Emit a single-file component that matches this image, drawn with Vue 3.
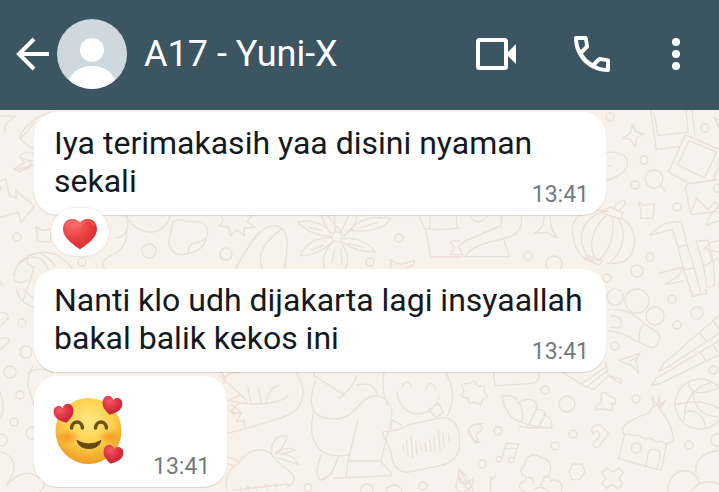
<template>
  <div class="chat-page">
    <!-- Header -->
    <header class="header">
      <button class="icon-btn back-btn" type="button" aria-label="Kembali">
        <svg viewBox="0 0 34 34" class="back-icon">
          <path d="M33 17H4M18 2 3 17l15 15" fill="none" stroke="currentColor" stroke-width="4" />
        </svg>
      </button>
      <svg class="avatar" viewBox="0 0 70 70" aria-hidden="true">
        <defs>
          <clipPath id="avatarClip"><circle cx="35" cy="35" r="35" /></clipPath>
        </defs>
        <g clip-path="url(#avatarClip)">
          <rect width="70" height="70" fill="#cfd8de" />
          <circle cx="35" cy="31" r="12" fill="#fff" />
          <path d="M12 61c4-9 12-14 23-14s19 5 23 14l-7 9H19z" fill="#fff" />
        </g>
      </svg>
      <h1 class="contact-name">{{ contact }}</h1>
      <nav class="actions">
        <button class="icon-btn" type="button" aria-label="Panggilan video">
          <svg viewBox="0 0 48 48" class="action-icon">
            <rect x="6" y="10" width="28" height="28" rx="1.5" fill="none" stroke="currentColor" stroke-width="4" />
            <path d="M34 24 44 14v20z" fill="currentColor" />
          </svg>
        </button>
        <button class="icon-btn" type="button" aria-label="Panggilan suara">
          <svg viewBox="0 0 48 48" class="action-icon">
            <path
              d="M10 10C10.500 14 11 17 12.800 20L17 15.800 16.200 10zM28 35.200C31 37 34 37.500 38 38V31.800L32.200 31zM8 6H18q1.400 0 1.600 1.600L21 16q.2 1.300-.7 2.200L15 23.500C17.500 28 20 30.500 24.500 33L29.800 27.700q.9-.9 2.200-.7L40.400 28.400q1.600.2 1.600 1.600V40q0 2-2 2C21 42 6 27 6 8q0-2 2-2z"
              fill="currentColor" fill-rule="evenodd"
            />
          </svg>
        </button>
        <button class="icon-btn" type="button" aria-label="Menu">
          <svg viewBox="0 0 24 48" class="menu-icon">
            <circle cx="12" cy="12" r="4" fill="currentColor" />
            <circle cx="12" cy="24" r="4" fill="currentColor" />
            <circle cx="12" cy="36" r="4" fill="currentColor" />
          </svg>
        </button>
      </nav>
    </header>

    <main class="chat">
      <!-- Wallpaper -->
      <svg class="wallpaper" viewBox="0 110 719 382" preserveAspectRatio="xMinYMin slice" aria-hidden="true">
        <g class="doodle">
          <circle v-for="(dot, i) in dots" :key="i" :cx="dot[0]" :cy="dot[1]" :r="dot[2]" />
        </g>

        <!-- photos, lantern and bamboo -->
        <g class="doodle large" transform="translate(460 100) scale(.3333)">
          <path d="M517 74l11 22 25 6-23 12-5 26-13-21-24-5 23-14z" />
          <path d="M572 30l17 119 67-9M696 30l9 76M582 38l12 68 91-9-7-67" />
          <path d="M676 104l110 48M676 104l-50 112 62 34 70-8 24-55M687 122l-34 73 81 39 36-77z" />
          <path d="M762 52l20 12M764 54l12 28M600 255l17 18" />
          <path d="M440 157c45-4 67 14 62 40-4 20-28 33-62 45M443 196l10 4M470 212h2" />
          <path d="M790 237l-102 14q-13 3-11 16l15 77 98-12M692 341l18-47 34 36 20-25 25 29M790 250q-35 3-28 20 6 10 28 5M790 303l-38 42-14 31 52-18" />
          <path d="M537 305l14 12 32-6-4 44-38-1 3-18z" />
          <path d="M440 334c-70-14-113 23-101 75 9 52 34 68 45 69M482 354c42 20 51 73 32 108-17 30-47 31-72 27M430 334c-68 23-79 82-51 130 8 14 19 18 25 19M443 343c-37 27-56 82-45 112 3 17 11 24 21 25M456 350c12 40-8 113-44 132M472 353c32 38 18 105-25 136M382 466l-9 12 46 17 8-13zM432 333q20-18 28-8l29 14-7 18-52-16zM462 329c2-21 27-32 34-24 4 12-12 17-23 30" />
          <path d="M665 366c-47-4-73 15-96 40l68-18 17 54 27-8zM654 442l17 67 32-5-22-70M671 509l28 79 24-7-20-77M709 424l35-3 16 61-29 17zM731 499l10 64 23-7-4-74M599 519l72-18-16 27-41 25 57-10M790 420l-35 6-23 20 52 12M744 448l12 35 34-12" />
          <path d="M252 350c2 29-16 44-31 51l40-4 30 17c-18-31-21-42-21-63" />
          <path d="M124 347v30L20 421l-25 18 15 31h138l-15-46M184 347c2 39-4 50-39 65L78 429c-32 10-55 26-60 40M30 350q22 30 52 0" />
        </g>

        <!-- skewer, chopsticks, hut, shell, trees -->
        <g class="doodle large" transform="translate(460 290) scale(.3333)">
          <path d="M445 59c46-5 78 10 107 42l40 26c16 14 0 50-20 45l-47-21c-21-15-48-25-80-29M454 78c34 0 37 28 22 36l-25-2M552 101q-20 18-13 55" />
          <path d="M790 65L609 223l-12 22 24-12L790 122M720 130l16 20M760 93l15 22M790 145L588 265l-12 22 25-7 189-92M721 187l15 22M760 163l13 25" />
          <path d="M475 211l65-21-12 22 8 37-20-22zM512 212l20-10" />
          <path d="M307 247l65 40 29 12 44-42-8-43M365 282l70-49M379 292l63-50M447 258l31 20q10 4 6-9l-33-12" />
          <path d="M101 247l3 32q2 9 13 8l101-7q20 0 20-34" />
          <path d="M646 345c53-17 98-14 140 17M690 276c-11 14 8 31 28 32 36 2 45-14 68-16M755 277c-43 10-86 48-82 113M678 365c28-8 55 10 59 50M770 380c-42 0-73-35-70-76" />
          <path d="M577 353l-11 18c-33 7-66 26-79 43-2 17 12 23 18 16l17 8 15-2 15 10 19-1 16 10 19-1 12 9 13-7q13-1 9-15c-6-32-19-58-36-77l-8-14M577 353q12-11 27-2M581 351l-5-30 13 22M592 344l6-25 2 27 16-15-14 22M493 436l-17 70 128 35 15-77M557 531l8-42c10-20 39-11 35 10l-8 37" />
          <circle cx="529" cy="474" r="15" />
          <path d="M126 319c36-10 66 15 61 77-31-2-55-36-61-77zM173 340c38-24 62-10 56 18l-24 49-18-11M229 358c31 1 32 23 16 33l-10 20-26-6M251 377c23-1 27 31 23 37l-39-3M178 409l36 5h60" />
          <path d="M425 309q14-5 18 6l24 12-1 15-13-3q11 20 0 23-22-9-45-2c-5-11 5-19 17-22-4-14-1-25 0-29z" />
          <path d="M36 276q9-7 12 6 5 10 16 6 12-3 10 8-4 12 5 17 8 10-6 13-9 3-7 10-5 12-14 4-7-7-16-2-12 3-11-8-2-9-12-7-12-4-4-15 6-9-2-14-6-12 8-13 13 1 21-5z" />
          <path d="M28 421c-1-19 32-26 38-9 2 17-20 14-18 26l8 18-12 3zM398 432c-10-23 17-35 30-21l18 20-33 42q-12-1-16-11l23-24-8-16z" />
          <path d="M126 506l13-46 38 2-14 41M134 475l36 1" />
          <circle cx="117" cy="508" r="8" />
          <circle cx="154" cy="510" r="8" />
          <path d="M199 562c-23-7-17-31-4-36-2-26 26-39 45-25 25 2 37 25 30 43q-2 18-18 17M193 606c-21-7-17-29-1-31 8-21 29-13 28 3M241 588l13-29q20 0 18 15 19-11 34 11l-2 25M221 600q25-20 48 10" />
          <path d="M338 522l28 1 9 22-15 23-25 1-8-24zM426 546l17-12 17 13 17-13 14 14-14 16 11 17-13 15-18-12-18 11-14-15 13-14z" />
          <path d="M625 610c-8-44 26-73 60-67 21 5 33 27 31 41M708 548c-6-37 23-65 77-67M693 610c14-37 56-43 92-25M92 610v-49M92 564q9 5 13-7M0 540q28 23 40 65M0 563l29 43M690 0l6 20 45-9-5-13" />
        </g>

        <!-- flower, thumb and planet between the bubbles -->
        <g class="doodle large" transform="translate(200 200) scale(.3333)">
          <path d="M397 100q-48-49-104-33 42 43 100 41M393 113q-70 0-92 54 52 1 97-42M400 125q-42 43-25 84M420 125q36 41 15 84M428 116q60-7 98 40-59 1-99-31M424 97L378 40M422 97l28-58M432 107q49-39 34-65M391 100q-28-45-25-60M406 94l-3-50M453 92q30-50 119-36-27 43-115 36M474 85l61-18M326 82l41 10M336 150l34-14M404 150l-9 38M423 149l4 43M446 130l45 13" />
          <path d="M107 204c48-84 77-130 120-127 25 5 33 23 34 50 2 23-3 52-8 78M245 88c-38 26-65 58-64 92l6 28M180 160h2" />
          <path d="M66 49q10 18-11 28l31 4 6 26 20-18 21 18 0-23 32-2-23-17 13-20" />
          <path d="M658 51l16 34q53 8 105-2M690 45v40M770 45v35M678 90l14 81h90M780 124q-25-5-31 4 22 8 2 36h29M568 180l34 13 42-11-2 12-27 13M572 204l3-25" />
          <path d="M-40 65q-27-14-42 4l-12 60c6 31 29 41 55 32 41-5 58-28 63-68-7-23-18-29-35-29zM-35 160q-3-28 24-32 20-4 32-16" />
          <path d="M-225 45c42 73 122 64 136 0M-220 42c8 46 2 62-30 72M-220 85q4 65-52 83-34 24-12 41" />
        </g>

        <!-- hugging figures -->
        <g class="doodle large" transform="translate(220 360) scale(.3333)">
          <path d="M0 48l80 73M230 38c32 52 23 98-21 126q-61 24-205 61M84 84l8 42M115 82l9 48M137 130q5-43 39-55M64 130q97 9 140-21M80 128q-43 1-43 31l27-1-15 27 23-3 2 17" />
          <path d="M282 38v9l91 58M410 47q-11 39-53 68M286 63c-31 88 0 116 65 114 69-10 65-72 123-70 35 11 48 39 38 77l-29 117M410 75q53-12 62 30M280 160c-18 84 16 143 107 124M414 181l-30 122h97l33 34-1 10-171 8M383 303l-4 45M303 285q-24 65 0 75 31 0 52-72M336 340l-29 17M492 38q-10 54 11 98M678 38q38 72 3 130M518 181l28 15M516 187l-3 24" />
          <path d="M546 82q14-32 30-2M617 87q15-32 31 0M530 95c12 85 107 88 127 14M625 150l31-20 14 27-21 15zM490 215q44 0 73-20l102-22c46-1 58 40 53 91-5 25-25 47-58 53l-98 20q-45-2-48-60l-27-57z" />
          <path d="M548 253l3 22M560 240l4 49M573 229l5 63M587 244l4 37M602 253l3 20M615 247l4 28M629 240l4 34M641 226l4 49M655 210l5 63M669 219l3 44M685 220l4 27" />
          <path d="M20 390c-6-28-2-56 34-81 44-55 90-48 115-8l50 44q12 24-18 35M58 310q-20-23-50-17M45 318l-30-9M158 290c-13-37 13-69 43-61q-7 35-36 50M168 283q32-29 59-13l-48 13q38-5 56 30l-64-20M40 390l164-18M60 380l3 16M83 376l3 16M108 376l3 16M136 372l5 16M166 370l5 18" />
          <path d="M790 191q-37-2-46 21 5 29 36 36M717 325l-2 28q-20 45 16 44 39-24 26-39l-18 10zM719 350q-5 29 26 20" />
        </g>

        <!-- left edge -->
        <g class="doodle large" transform="translate(0 100) scale(.3333)">
          <path d="M0 47l46 2-30 25-2 25M153 36Q81 59 59 111q6 19 42 34M105 65L63 116M100 161q-33-10-40 11l14 15-30 19 12 10 34-15q7-17-9-21M45 210l54-14M63 174l35 10M0 244l17-7 11 49 21 8-2-22 57 46-41 50-8-31-56 16M-2 255q12 15-1 21" />
          <path d="M107 380l21 12 28-5-6 39-41-2 4-13zM42 527c4-44 49-73 100-69 44 4 65 37 76 49M60 487q61-38 84 20M84 465q-9 32 19 36l-33 99M43 540q20 15 40 0M118 460q36 14 46 39M0 545l7 11" />
          <path d="M50 569q10 42 49 52M70 568l29 26M0 638q29-2 24 19L0 680M0 716q31-9 27 10l-27 23M98 799q-14 28-15 57l19 63M84 820q38-25 75 0M0 874q19 60 0 77M0 1055q47 12 42 58l-22 43q50-60 100-20 25 10 0 40" />
          <path d="M650 810q30 10 22 40 0-35 48-32M720 885l-35 17 35 6M692 913l28 20M690 930l15 20" />
        </g>
      </svg>

      <section class="messages">
        <template v-for="message in messages" :key="message.id">
          <article class="bubble" :class="{ 'is-emoji': message.emoji }">
            <svg v-if="message.emoji" class="emoji" viewBox="0 0 69 69" role="img" aria-label="Wajah tersenyum dengan hati">
              <defs>
                <radialGradient id="face" cx=".5" cy=".35" r=".66">
                  <stop offset="0" stop-color="#ffe982" />
                  <stop offset=".55" stop-color="#fdd04a" />
                  <stop offset="1" stop-color="#eb9b26" />
                </radialGradient>
                <radialGradient id="cheek">
                  <stop offset="0" stop-color="#f58a1c" stop-opacity=".75" />
                  <stop offset="1" stop-color="#f58a1c" stop-opacity="0" />
                </radialGradient>
                <radialGradient id="smallHeart" cx=".35" cy=".25" r=".8">
                  <stop offset="0" stop-color="#f45864" />
                  <stop offset=".4" stop-color="#e33a4a" />
                  <stop offset="1" stop-color="#bf2032" />
                </radialGradient>
              </defs>
              <circle cx="34.500" cy="35" r="33" fill="url(#face)" />
              <ellipse cx="14" cy="41" rx="12" ry="8" fill="url(#cheek)" />
              <ellipse cx="56" cy="41" rx="12" ry="8" fill="url(#cheek)" />
              <path d="M17.500 32c1-8 10-8 11 0M41.500 32c1-8 10-8 11 0" fill="none" stroke="#70501c" stroke-width="3.500" stroke-linecap="round" />
              <path d="M23 44.500q12 7 24 0-2 8-12 8t-12-8z" fill="#684713" stroke="#684713" stroke-width="1" stroke-linejoin="round" />
              <path v-for="place in faceHearts" :key="place" :transform="place" d="M0 10C-5 7-10 4-10-2-10-9-2-10 0-5 2-10 10-9 10-2 10 4 5 7 0 10z" fill="url(#smallHeart)" />
            </svg>
            <p v-else class="text">
              <span v-for="line in message.lines" :key="line" class="line">{{ line }}</span>
            </p>
            <time class="time">{{ message.time }}</time>
          </article>
          <button v-if="message.reaction" class="reaction" type="button" aria-label="Reaksi hati">
            <svg class="heart" viewBox="0 0 34 31">
              <defs>
                <radialGradient id="heart" cx=".32" cy=".2" r=".9">
                  <stop offset="0" stop-color="#fb6c69" />
                  <stop offset=".45" stop-color="#ec4343" />
                  <stop offset="1" stop-color="#cf272b" />
                </radialGradient>
              </defs>
              <path d="M17 30.500C13 27 0 20 0 10 0 4 4 0 9 0c4 0 7 2 8 4 1-2 4-4 8-4 5 0 9 4 9 10C34 20 21 27 17 30.500z" fill="url(#heart)" />
              <path d="M3 7q2-5 6-5 5 0 8 5 3-5 8-5 4 0 6 4" fill="none" stroke="#ff9a94" stroke-width="1" stroke-linecap="round" opacity=".5" />
            </svg>
          </button>
        </template>
      </section>
    </main>
  </div>
</template>

<script setup>
import { ref } from 'vue'

const contact = ref('A17 - Yuni-X')

const messages = ref([
  { id: 1, lines: ['Iya terimakasih yaa disini nyaman', 'sekali'], time: '13:41', reaction: true },
  { id: 2, lines: ['Nanti klo udh dijakarta lagi insyaallah', 'bakal balik kekos ini'], time: '13:41' },
  { id: 3, emoji: true, time: '13:41' }
])

// hearts around the smiling face
const faceHearts = [
  'translate(10 17) rotate(-14)',
  'translate(58 9) rotate(14)',
  'translate(59 58) rotate(14)'
]

// small wallpaper circles: x, y, radius
const dots = [
  [610, 117, 4], [705, 128, 4], [644, 160, 4], [654, 179, 9], [635, 185, 4],
  [677, 207, 4], [650, 257, 4], [637, 271, 6], [528, 256, 4], [554, 264, 8],
  [607, 278, 4], [615, 297, 8], [637, 301, 12], [655, 316, 9], [672, 299, 4],
  [697, 313, 6], [677, 325, 4], [615, 346, 4], [545, 390, 4], [567, 404, 8],
  [636, 399, 4], [713, 370, 4], [700, 404, 25], [498, 431, 4], [573, 434, 4],
  [555, 446, 4], [482, 464, 4], [689, 445, 4], [717, 440, 6],
  [17, 237, 4], [149, 251, 7], [226, 254, 6], [82, 262, 4], [22, 323, 4],
  [26, 352, 6], [10, 372, 6], [20, 395, 4], [14, 422, 4], [1, 440, 6],
  [32, 433, 6], [399, 238, 4], [370, 262, 4], [337, 237, 5], [308, 488, 4],
  [423, 486, 4], [367, 490, 6], [394, 493, 8]
]
</script>

<style>
body {
  margin: 0;
}
</style>

<style scoped>
.chat-page {
  min-height: 100vh;
  display: flex;
  flex-direction: column;
  font-family: Roboto, "Liberation Sans", sans-serif;
  background: #f7f3ec;
}

.header {
  display: flex;
  align-items: center;
  height: 110px;
  padding: 0 31px 2px 16px;
  box-sizing: border-box;
  background: #3b5561;
  color: #fff;
}

.icon-btn {
  display: flex;
  padding: 0;
  border: none;
  background: none;
  color: inherit;
  cursor: pointer;
}

.back-icon {
  width: 34px;
  height: 34px;
}

.avatar {
  width: 70px;
  height: 70px;
  margin: 0 17px 0 7px;
  flex-shrink: 0;
}

.contact-name {
  margin: 0;
  flex: 1;
  font-size: 36px;
  line-height: 42px;
  font-weight: 400;
  white-space: nowrap;
}

.actions {
  display: flex;
  align-items: center;
  gap: 48px;
}

.action-icon {
  width: 48px;
  height: 48px;
}

.menu-icon {
  width: 24px;
  height: 48px;
}

.chat {
  position: relative;
  flex: 1;
  overflow: hidden;
}

.wallpaper {
  position: absolute;
  inset: 0;
  width: 100%;
  height: 100%;
}

.doodle {
  fill: none;
  stroke: #ecdfd6;
  stroke-width: 1.4;
  stroke-linecap: round;
  stroke-linejoin: round;
}

.doodle.large {
  stroke-width: 4.2;
}

.messages {
  position: relative;
  display: flex;
  flex-direction: column;
  align-items: flex-start;
  padding: 2px 113px 5px 34px;
}

.bubble {
  position: relative;
  width: 100%;
  padding: 12px 20px 15px;
  box-sizing: border-box;
  border-radius: 24px;
  background: #fff;
  box-shadow: 0 1px 1px rgba(60, 50, 40, 0.16);
}

.bubble + .bubble {
  margin-top: 4px;
}

.text {
  margin: 0;
  font-size: 32px;
  line-height: 38px;
  color: #14191c;
}

.line {
  display: block;
}

.time {
  position: absolute;
  right: 17px;
  bottom: 6px;
  font-size: 23px;
  line-height: 28px;
  color: #747a7d;
}

.is-emoji {
  display: flex;
  align-items: flex-end;
  gap: 30px;
  width: auto;
  padding: 20px 17px 6px 20px;
}

.is-emoji .time {
  position: static;
}

.emoji {
  width: 69px;
  height: 69px;
  margin-bottom: 16px;
  overflow: visible;
}

.reaction {
  position: relative;
  display: flex;
  align-items: center;
  justify-content: center;
  width: 58px;
  height: 48px;
  margin: -7px 0 13px 17px;
  padding: 4px 0 0;
  border: none;
  border-radius: 24px;
  background: #fff;
  box-shadow: 0 0 1px 1px rgba(60, 50, 40, 0.08);
  cursor: pointer;
}

.heart {
  width: 34px;
  height: 31px;
}
</style>
